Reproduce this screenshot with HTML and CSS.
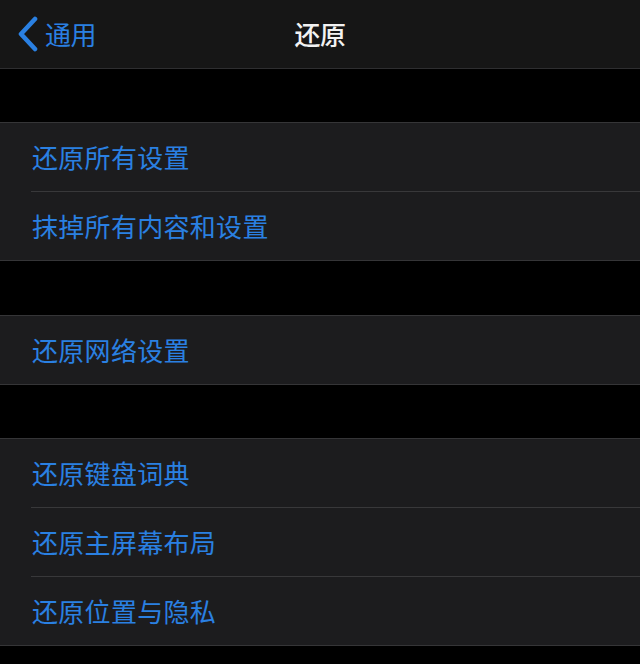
FILE: index.html
```html
<!DOCTYPE html>
<html lang="zh-CN">
<head>
<meta charset="utf-8">
<title>还原</title>
<link rel="stylesheet" href="styles.css">
</head>
<body>
<header class="navbar">
  <a class="back" href="#">
    <svg class="chevron" width="22" height="36" viewBox="0 0 22 36">
      <path d="M18 3 L4 18 L18 33" fill="none" stroke="currentColor" stroke-width="4.6" stroke-linecap="round" stroke-linejoin="round"/>
    </svg>
    <span class="back-label">通用</span>
  </a>
  <h1 class="title">还原</h1>
</header>

<main class="settings">
  <div class="spacer"></div>
  <ul class="group">
    <li class="row">还原所有设置</li>
    <li class="row">抹掉所有内容和设置</li>
  </ul>
  <div class="spacer spacer-wide"></div>
  <ul class="group">
    <li class="row">还原网络设置</li>
  </ul>
  <div class="spacer"></div>
  <ul class="group">
    <li class="row">还原键盘词典</li>
    <li class="row">还原主屏幕布局</li>
    <li class="row">还原位置与隐私</li>
  </ul>
</main>
</body>
</html>
```
FILE: styles.css
```css
html, body {
  margin: 0;
  padding: 0;
  background: #000;
  height: 100%;
}

body {
  font-family: "Noto Sans CJK SC", "Noto Sans", sans-serif;
  color: #fff;
  overflow: hidden;
}

.navbar {
  height: 68px;
  background: #161616;
  border-bottom: 1px solid #2e2e30;
  display: flex;
  align-items: center;
  justify-content: center;
  position: relative;
}

.back {
  position: absolute;
  left: 17px;
  top: 0;
  height: 68px;
  display: flex;
  align-items: center;
  gap: 6px;
  color: #2a80e2;
  text-decoration: none;
}

.chevron {
  display: block;
  margin-top: 0;
}

.back-label {
  font-size: 26px;
  line-height: 1;
  letter-spacing: -0.5px;
}

.title {
  margin: 0;
  font-size: 26px;
  font-weight: 500;
  line-height: 1;
  letter-spacing: -0.5px;
  color: #f2f2f2;
}

.spacer {
  height: 53px;
}

.spacer-wide {
  height: 54px;
}

.group {
  list-style: none;
  margin: 0;
  padding: 0 0 0 31px;
  background: #1c1c1e;
  border-top: 1px solid #353537;
  border-bottom: 1px solid #353537;
}

.row {
  height: 68px;
  display: flex;
  align-items: center;
  padding-left: 1px;
  font-size: 26px;
  line-height: 1;
  letter-spacing: 0.3px;
  color: #2a80e2;
  border-bottom: 1px solid #38383a;
}

.row:last-child {
  border-bottom: none;
}
```
